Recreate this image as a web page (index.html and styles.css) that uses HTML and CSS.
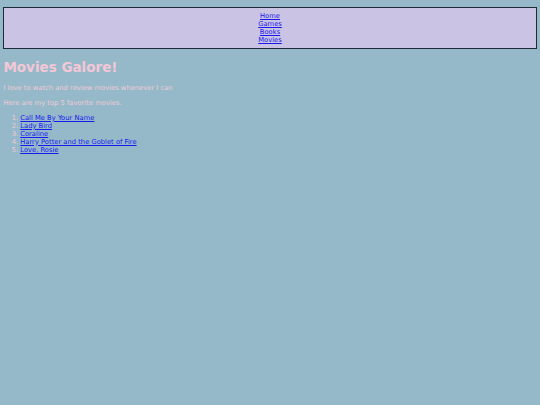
FILE: index.html
```html
<!DOCTYPE html>
<html>
<head>
<meta charset="utf-8">
<title>Movies Galore!</title>
<link rel="stylesheet" href="styles.css">
</head>
<body>
<ul class="nav">
  <li><a href="#">Home</a></li>
  <li><a href="#">Games</a></li>
  <li><a href="#">Books</a></li>
  <li><a href="#">Movies</a></li>
</ul>
<h1 class="title">Movies Galore!</h1>
<p class="text">I love to watch and review movies whenever I can</p>
<p class="text">Here are my top 5 favorite movies.</p>
<ol class="movies">
  <li><a href="#">Call Me By Your Name</a></li>
  <li><a href="#">Lady Bird</a></li>
  <li><a href="#">Coraline</a></li>
  <li><a href="#">Harry Potter and the Goblet of Fire</a></li>
  <li><a href="#">Love, Rosie</a></li>
</ol>
</body>
</html>
```
FILE: styles.css
```css
html {
  background: #95b9c8;
  zoom: 0.421875;
}
body {
  margin: 0 8px 8px;
  font-family: "DejaVu Sans", Verdana, sans-serif;
  font-size: 16px;
  color: #f0cbd8;
}
a {
  color: #1a1aee;
}
.nav {
  margin: 16px 0;
  padding: 10px 0;
  background: #cbc3e3;
  border: 3px solid #1e2b34;
  text-align: center;
  color: #e9b6cc;
}
.nav li::marker {
  content: "\2022\200A";
}
.title {
  font-size: 32px;
  margin: 24px 0 21px;
  color: #f4c7d6;
}
.text {
  margin: 1em 0;
}
.movies {
  margin: 1em 0;
  padding-left: 40px;
}
```
